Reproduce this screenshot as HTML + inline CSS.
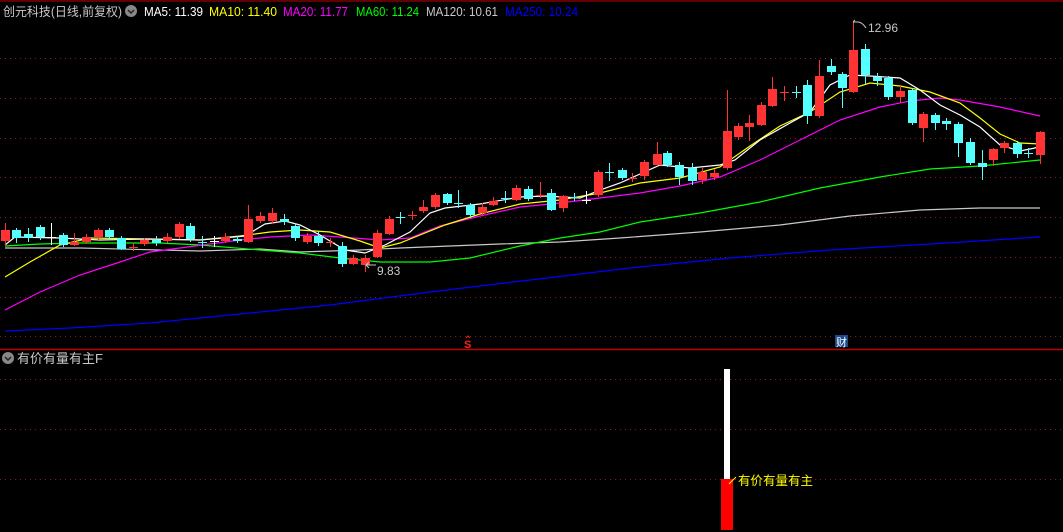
<!DOCTYPE html>
<html><head><meta charset="utf-8"><style>
html,body{margin:0;padding:0;background:#000;overflow:hidden}
svg{display:block}
text{font-family:"Liberation Sans","Noto Sans CJK SC",sans-serif}
</style></head><body>
<svg width="1063" height="532" viewBox="0 0 1063 532" xmlns="http://www.w3.org/2000/svg">
<rect width="1063" height="532" fill="#000"/>
<line x1="0" y1="1" x2="1063" y2="1" stroke="#c00000" stroke-width="1"/>
<g stroke="#8b1a1a" stroke-width="1" stroke-dasharray="1,4">
<line x1="0" y1="58.5" x2="1063" y2="58.5"/><line x1="0" y1="98.5" x2="1063" y2="98.5"/>
<line x1="0" y1="138.5" x2="1063" y2="138.5"/><line x1="0" y1="177.5" x2="1063" y2="177.5"/>
<line x1="0" y1="217.5" x2="1063" y2="217.5"/><line x1="0" y1="257.5" x2="1063" y2="257.5"/>
<line x1="0" y1="297.5" x2="1063" y2="297.5"/><line x1="0" y1="336.5" x2="1063" y2="336.5"/>
<line x1="0" y1="379.5" x2="1063" y2="379.5"/><line x1="0" y1="429.5" x2="1063" y2="429.5"/>
<line x1="0" y1="479.5" x2="1063" y2="479.5"/>
</g>
<line x1="0" y1="349.5" x2="1063" y2="349.5" stroke="#c00000" stroke-width="1.5"/>

<!-- header -->
<text x="3" y="16" font-size="12.5" fill="#c8c8c8" textLength="119" lengthAdjust="spacingAndGlyphs">创元科技(日线,前复权)</text>
<circle cx="131" cy="11" r="6" fill="#888"/><path d="M128 10l3 3 3-3" stroke="#222" stroke-width="1.5" fill="none"/>
<text x="144" y="16" font-size="12.5" fill="#fff" textLength="59" lengthAdjust="spacingAndGlyphs">MA5: 11.39</text>
<text x="209" y="16" font-size="12.5" fill="#ffff00" textLength="68" lengthAdjust="spacingAndGlyphs">MA10: 11.40</text>
<text x="283" y="16" font-size="12.5" fill="#ff00ff" textLength="65" lengthAdjust="spacingAndGlyphs">MA20: 11.77</text>
<text x="356" y="16" font-size="12.5" fill="#00ff00" textLength="63" lengthAdjust="spacingAndGlyphs">MA60: 11.24</text>
<text x="426" y="16" font-size="12.5" fill="#c8c8c8" textLength="72" lengthAdjust="spacingAndGlyphs">MA120: 10.61</text>
<text x="505" y="16" font-size="12.5" fill="#0000ff" textLength="73" lengthAdjust="spacingAndGlyphs">MA250: 10.24</text>

<!-- MAs -->
<g fill="none" stroke-width="1.2">
<polyline stroke="#0000ff" points="5,331 70,328 150,323 250,313 330,305 430,292 530,280 630,268 730,258 830,250 930,244 1040,237"/>
<polyline stroke="#c8c8c8" points="5,248 80,248 200,251 260,249 300,252 360,250 400,248 450,246 500,244 560,242 620,238 700,232 780,225 850,216 920,210 980,208 1040,208"/>
<polyline stroke="#00ff00" points="5,246 40,244 80,243 160,243 200,245 260,250 300,253 340,258 380,262 430,262 470,258 520,246 560,238 600,232 640,222 700,213 760,202 820,188 880,177 930,169 980,166 1040,160"/>
<polyline stroke="#ff00ff" points="5,310 40,292 80,275 120,262 150,252 180,248 210,244 240,240 270,237 310,235 340,237 380,240 410,238 440,226 480,216 520,207 560,203 600,198 640,193 680,186 720,177 760,160 800,140 840,120 880,107 910,101 940,98 960,100 1000,107 1040,116"/>
<polyline stroke="#ffff00" points="5,277 30,262 60,245 90,238 150,239 200,240 240,236 270,232 300,230 330,232 360,241 380,248 400,243 420,235 445,225 480,214 520,204 560,200 600,193 640,183 680,178 720,167 750,146 780,126 810,112 840,92 870,83 900,86 930,92 960,103 980,118 1000,134 1020,143 1040,144"/>
<polyline stroke="#ffffff" points="5,245 15,237 60,238 100,240 150,239 200,240 245,236 265,224 285,221 300,225 320,235 345,250 365,253 385,245 410,232 430,213 445,208 480,204 520,197 545,196 580,198 600,190 620,183 640,174 660,165 690,168 720,165 735,160 760,140 790,123 810,112 830,85 850,75 870,76 900,78 920,90 940,105 960,115 980,127 1000,145 1020,151 1035,148 1040,145"/>
</g>

<!-- red candles -->
<path stroke="#ff3333" fill="none" d="M5.5 223V246M74.5 233V246M86.5 234V244M98.5 228V240M133.5 243V251M129 247.5h9M144.5 238V246M167.5 233V243M179.5 222V239M225.5 233V243M248.5 205V243M260.5 212V223M272.5 208V224M307.5 233V244M330.5 238V247M326 242.5h9M353.5 255V265M365.5 255V272M377.5 230V258M389.5 216V235M412.5 211V220M408 215.5h9M423.5 200V213M435.5 193V209M482.5 203V216M493.5 197V206M516.5 185V201M540.5 182V198M536 195.5h9M563.5 195V212M598.5 170V197M632.5 173V182M628 178.5h9M644.5 160V180M657.5 142V166M702.5 168V184M714.5 169V180M727.5 90V170M738.5 123V140M749.5 115V141M761.5 102V126M772.5 77V107M784.5 86V101M780 92.5h9M819.5 60V118M853.5 22V93M900.5 86V103M923.5 112V142M993.5 148V166M1004.5 141V153M1040.5 131V164"/>
<g fill="#ff3333">
<rect x="1" y="230" width="9" height="11"/><rect x="70" y="242" width="9" height="3"/><rect x="82" y="237" width="9" height="5"/><rect x="94" y="230" width="9" height="7"/><rect x="140" y="240" width="9" height="4"/><rect x="163" y="237" width="9" height="4"/><rect x="175" y="224" width="9" height="13"/><rect x="221" y="237" width="9" height="4"/><rect x="244" y="219" width="9" height="23"/><rect x="256" y="216" width="9" height="5"/><rect x="268" y="213" width="9" height="8"/><rect x="303" y="236" width="9" height="6"/><rect x="349" y="258" width="9" height="6"/><rect x="361" y="258" width="9" height="7"/><rect x="373" y="233" width="9" height="24"/><rect x="385" y="219" width="9" height="15"/><rect x="419" y="207" width="9" height="4"/><rect x="431" y="195" width="9" height="12"/><rect x="478" y="207" width="9" height="6"/><rect x="489" y="201" width="9" height="4"/><rect x="512" y="188" width="9" height="12"/><rect x="559" y="196" width="9" height="12"/><rect x="594" y="172" width="9" height="23"/><rect x="640" y="162" width="9" height="14"/><rect x="653" y="154" width="9" height="11"/><rect x="698" y="172" width="9" height="8"/><rect x="710" y="173" width="9" height="4"/><rect x="723" y="131" width="9" height="37"/><rect x="734" y="126" width="9" height="11"/><rect x="745" y="123" width="9" height="4"/><rect x="757" y="105" width="9" height="20"/><rect x="768" y="89" width="9" height="17"/><rect x="815" y="76" width="9" height="40"/><rect x="849" y="50" width="9" height="42"/><rect x="896" y="91" width="9" height="6"/><rect x="919" y="114" width="9" height="14"/><rect x="989" y="149" width="9" height="11"/><rect x="1000" y="143" width="9" height="5"/><rect x="1036" y="132" width="9" height="23"/>
</g>
<!-- cyan candles -->
<path stroke="#54ffff" fill="none" d="M16.5 228V243M28.5 228V242M40.5 225V240M63.5 233V247M109.5 228V240M121.5 236V250M156.5 236V246M190.5 223V242M202.5 236V248M198 242.5h9M237.5 236V243M284.5 214V225M295.5 223V241M318.5 231V246M342.5 242V267M400.5 212V224M396 217.5h9M447.5 193V205M458.5 190V208M454 203.5h9M470.5 203V218M505.5 191V203M501 198.5h9M528.5 186V201M551.5 189V211M574.5 193V201M570 197.5h9M609.5 163V181M605 172.5h9M622.5 168V180M667.5 151V167M679.5 162V185M692.5 163V185M796.5 86V98M792 92.5h9M807.5 80V124M831.5 59V75M842.5 72V108M865.5 44V84M877.5 73V86M888.5 76V100M912.5 88V125M935.5 113V130M946.5 118V130M958.5 122V157M970.5 138V165M982.5 150V180M1017.5 141V158M1028.5 148V158M1024 153.5h9"/>
<g fill="#54ffff">
<rect x="12" y="230" width="9" height="8"/><rect x="24" y="234" width="9" height="4"/><rect x="36" y="227" width="9" height="10"/><rect x="59" y="235" width="9" height="10"/><rect x="105" y="230" width="9" height="7"/><rect x="117" y="238" width="9" height="11"/><rect x="152" y="240" width="9" height="3"/><rect x="186" y="226" width="9" height="13"/><rect x="233" y="239" width="9" height="2"/><rect x="280" y="219" width="9" height="3"/><rect x="291" y="226" width="9" height="12"/><rect x="314" y="236" width="9" height="7"/><rect x="338" y="246" width="9" height="18"/><rect x="443" y="194" width="9" height="9"/><rect x="466" y="205" width="9" height="10"/><rect x="524" y="189" width="9" height="10"/><rect x="547" y="193" width="9" height="17"/><rect x="618" y="170" width="9" height="8"/><rect x="663" y="153" width="9" height="12"/><rect x="675" y="165" width="9" height="12"/><rect x="688" y="168" width="9" height="13"/><rect x="803" y="85" width="9" height="31"/><rect x="827" y="66" width="9" height="6"/><rect x="838" y="74" width="9" height="14"/><rect x="861" y="49" width="9" height="26"/><rect x="873" y="77" width="9" height="4"/><rect x="884" y="78" width="9" height="19"/><rect x="908" y="90" width="9" height="33"/><rect x="931" y="115" width="9" height="8"/><rect x="942" y="121" width="9" height="3"/><rect x="954" y="124" width="9" height="19"/><rect x="966" y="142" width="9" height="21"/><rect x="978" y="163" width="9" height="4"/><rect x="1013" y="143" width="9" height="11"/>
</g>
<!-- white crosses -->
<path stroke="#ffffff" fill="none" d="M51.5 223V245M47 237.5h9M214.5 236V247M210 241.5h9M586.5 191V204M582 200.5h9"/>

<!-- price labels -->
<path d="M853 22 l5 0 M853 22 l2 -2 M858 22 q4 0 8 6" stroke="#c8c8c8" fill="none"/>
<text x="868" y="32" font-size="12" fill="#c8c8c8">12.96</text>
<path d="M366 265 l3 3 M366 265 l3 -3 M366 265 h10" stroke="#c8c8c8" fill="none"/>
<text x="377" y="275" font-size="12" fill="#c8c8c8">9.83</text>

<!-- markers -->
<text x="464" y="348" font-size="11" font-weight="bold" fill="#ff2020">S</text>
<path d="M466 338 l2 -2 2 2" stroke="#ff2020" fill="none"/>
<rect x="835" y="335" width="13" height="12" fill="#1a4a8a"/>
<text x="836" y="346" font-size="11" fill="#fff">财</text>

<!-- lower panel -->
<circle cx="8" cy="358" r="6" fill="#888"/><path d="M5 357l3 3 3-3" stroke="#222" stroke-width="1.5" fill="none"/>
<text x="17" y="363" font-size="13" fill="#c8c8c8">有价有量有主F</text>
<rect x="724" y="369" width="6" height="111" fill="#fff"/>
<rect x="721" y="479" width="12" height="51" fill="#ff0000"/>
<path d="M729 484 l7 -7" stroke="#ffff00" fill="none"/>
<text x="738" y="485" font-size="12.5" fill="#ffff00">有价有量有主</text>
</svg>
</body></html>
